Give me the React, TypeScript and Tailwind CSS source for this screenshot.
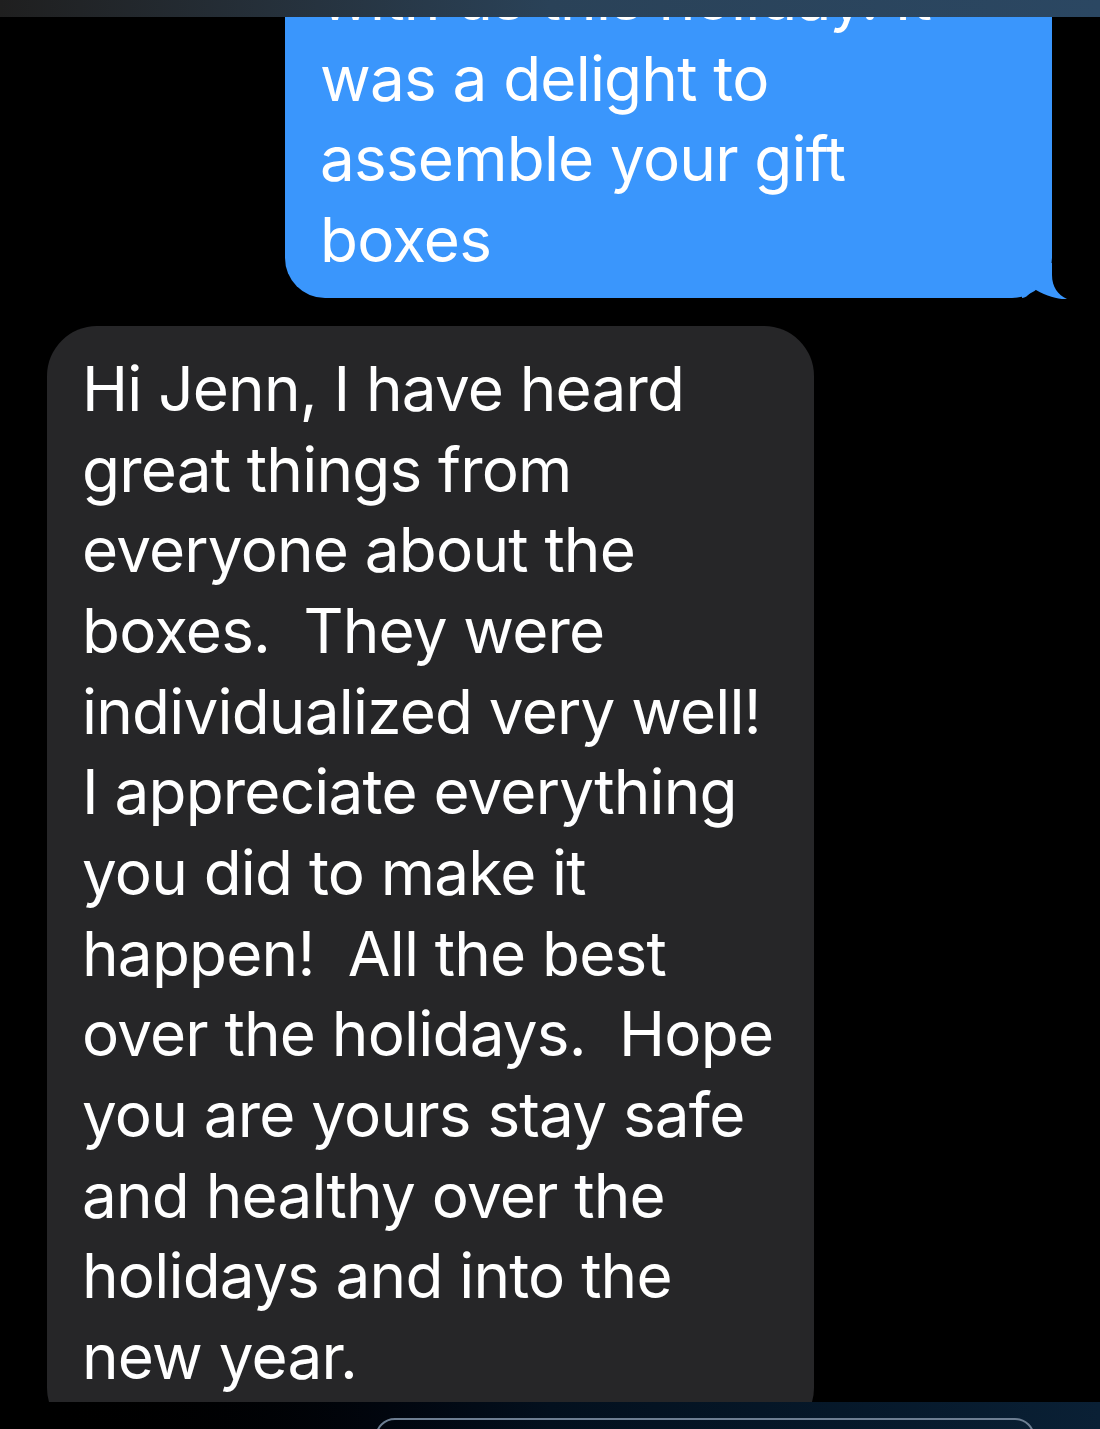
import React from 'react';

const FONT = { fontFamily: 'Inter, "Noto Sans", "Liberation Sans", sans-serif' };

const blueLines = ['with us this holiday. It', 'was a delight to', 'assemble your gift', 'boxes'];

const grayLines = [
  'Hi Jenn, I have heard',
  'great things from',
  'everyone about the',
  'boxes.  They were',
  'individualized very well!',
  'I appreciate everything',
  'you did to make it',
  'happen!  All the best',
  'over the holidays.  Hope',
  'you are yours stay safe',
  'and healthy over the',
  'holidays and into the',
  'new year.',
];

function BlueTail() {
  return (
    <svg className="absolute right-[-15px] bottom-[-1px]" width="45" height="36" viewBox="0 0 45 36">
      <path d="M0 0 L30 0 L30 12 C30 24 36 32 45 36 C38 37 22 33 11 25 C8 31 4 35 0 35 Z" fill="#3a96fc" />
    </svg>
  );
}

function GrayTail() {
  return (
    <svg className="absolute left-[-3px] bottom-[-2px]" width="30" height="30" viewBox="0 0 30 30">
      <path d="M3 0 L20 0 L20 30 L0 30 C2 22 3 12 3 0 Z" fill="#262628" />
    </svg>
  );
}

export default function App() {
  return (
    <div className="w-[1100px] h-[1429px] bg-black flex flex-col overflow-hidden" style={FONT}>
      <div className="h-[17px] shrink-0 bg-gradient-to-r from-[#1f1f1f] via-[#2a4258] to-[#2b4762]" />

      <div className="flex-1 flex flex-col overflow-hidden">
        <div className="flex justify-end pr-[48px] mt-[-63px]">
          <div className="relative w-[767px] bg-[#3a96fc] rounded-[40px] pl-[35px] pr-[30px] pt-[4px] pb-[18px] text-white text-[62px] leading-[80.5px] tracking-[-0.8px]">
            {blueLines.map((l) => (
              <div key={l} className="whitespace-nowrap">{l}</div>
            ))}
            <BlueTail />
          </div>
        </div>

        <div className="flex pl-[47px] mt-[28px]">
          <div className="relative w-[767px] bg-[#262628] rounded-[50px] pl-[35px] pr-[30px] pt-[23px] pb-[40px] text-white text-[62px] leading-[80.67px] tracking-[-0.8px]">
            {grayLines.map((l, i) => (
              <div key={i} className="whitespace-pre">{l}</div>
            ))}
            <GrayTail />
          </div>
        </div>
      </div>

      <div className="h-[27px] shrink-0 bg-gradient-to-r from-black via-[#03101e] to-[#0a2035] flex pl-[375px] pt-[16px]">
        <div className="w-[660px] h-[40px] border-[2px] border-[#6d7e92] rounded-[24px]" />
      </div>
    </div>
  );
}
